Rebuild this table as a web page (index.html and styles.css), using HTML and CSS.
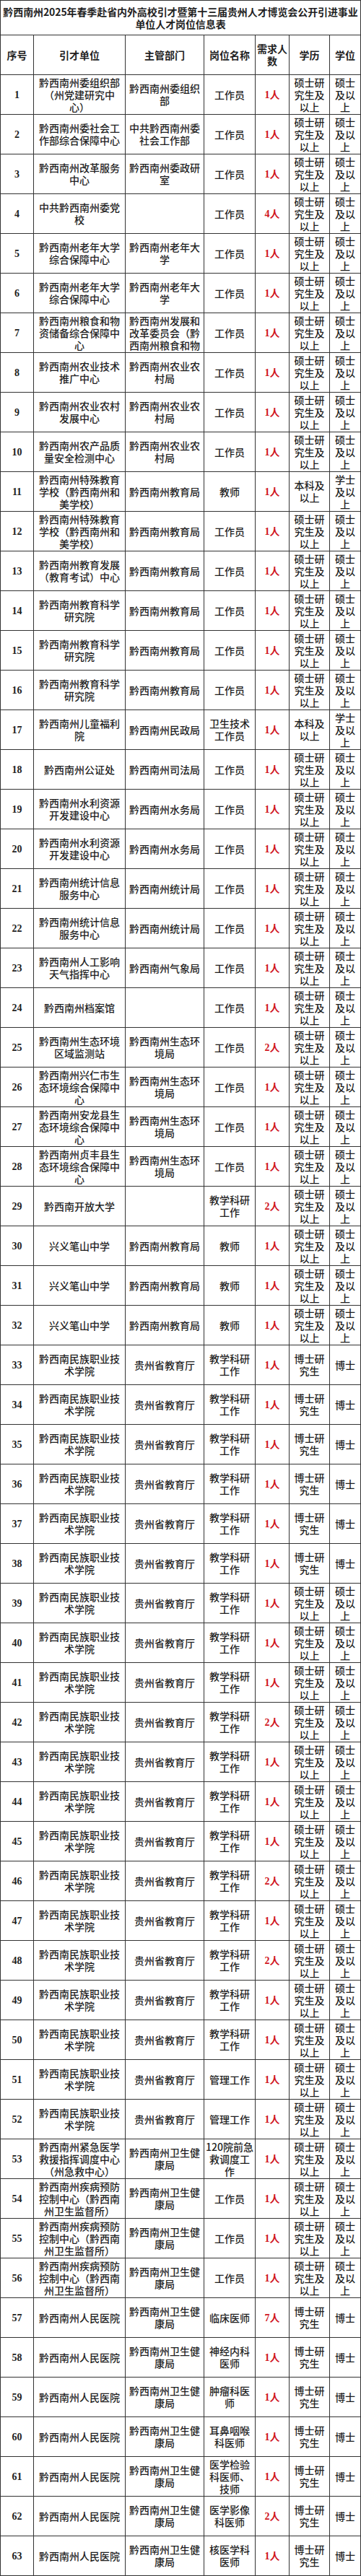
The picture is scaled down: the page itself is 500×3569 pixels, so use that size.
FILE: index.html
```html
<!DOCTYPE html>
<html lang="zh-CN">
<head>
<meta charset="utf-8">
<title>黔西南州2025年春季赴省内外高校引才暨第十三届贵州人才博览会公开引进事业单位人才岗位信息表</title>
<link rel="stylesheet" href="styles.css">
</head>
<body>
<div class="sheet">
  <div class="title">黔西南州2025年春季赴省内外高校引才暨第十三届贵州人才博览会公开引进事业<br>单位人才岗位信息表</div>

  <div class="row head">
    <div class="cell">序号</div><div class="cell">引才单位</div><div class="cell">主管部门</div><div class="cell">岗位名称</div><div class="cell">需求人数</div><div class="cell">学历</div><div class="cell">学位</div>
  </div>

  <div class="row"><div class="cell num">1</div><div class="cell">黔西南州委组织部（州党建研究中心）</div><div class="cell">黔西南州委组织部</div><div class="cell">工作员</div><div class="cell red">1人</div><div class="cell">硕士研究生及以上</div><div class="cell">硕士及以上</div></div>
  <div class="row"><div class="cell num">2</div><div class="cell">黔西南州委社会工作部综合保障中心</div><div class="cell">中共黔西南州委社会工作部</div><div class="cell">工作员</div><div class="cell red">1人</div><div class="cell">硕士研究生及以上</div><div class="cell">硕士及以上</div></div>
  <div class="row"><div class="cell num">3</div><div class="cell">黔西南州改革服务中心</div><div class="cell">黔西南州委政研室</div><div class="cell">工作员</div><div class="cell red">1人</div><div class="cell">硕士研究生及以上</div><div class="cell">硕士及以上</div></div>
  <div class="row"><div class="cell num">4</div><div class="cell">中共黔西南州委党校</div><div class="cell"></div><div class="cell">工作员</div><div class="cell red">4人</div><div class="cell">硕士研究生及以上</div><div class="cell">硕士及以上</div></div>
  <div class="row"><div class="cell num">5</div><div class="cell">黔西南州老年大学综合保障中心</div><div class="cell">黔西南州老年大学</div><div class="cell">工作员</div><div class="cell red">1人</div><div class="cell">硕士研究生及以上</div><div class="cell">硕士及以上</div></div>
  <div class="row"><div class="cell num">6</div><div class="cell">黔西南州老年大学综合保障中心</div><div class="cell">黔西南州老年大学</div><div class="cell">工作员</div><div class="cell red">1人</div><div class="cell">硕士研究生及以上</div><div class="cell">硕士及以上</div></div>
  <div class="row"><div class="cell num">7</div><div class="cell">黔西南州粮食和物资储备综合保障中心</div><div class="cell">黔西南州发展和改革委员会（黔西南州粮食和物</div><div class="cell">工作员</div><div class="cell red">1人</div><div class="cell">硕士研究生及以上</div><div class="cell">硕士及以上</div></div>
  <div class="row"><div class="cell num">8</div><div class="cell">黔西南州农业技术推广中心</div><div class="cell">黔西南州农业农村局</div><div class="cell">工作员</div><div class="cell red">1人</div><div class="cell">硕士研究生及以上</div><div class="cell">硕士及以上</div></div>
  <div class="row"><div class="cell num">9</div><div class="cell">黔西南州农业农村发展中心</div><div class="cell">黔西南州农业农村局</div><div class="cell">工作员</div><div class="cell red">1人</div><div class="cell">硕士研究生及以上</div><div class="cell">硕士及以上</div></div>
  <div class="row"><div class="cell num">10</div><div class="cell">黔西南州农产品质量安全检测中心</div><div class="cell">黔西南州农业农村局</div><div class="cell">工作员</div><div class="cell red">1人</div><div class="cell">硕士研究生及以上</div><div class="cell">硕士及以上</div></div>
  <div class="row"><div class="cell num">11</div><div class="cell">黔西南州特殊教育学校（黔西南州和美学校）</div><div class="cell">黔西南州教育局</div><div class="cell">教师</div><div class="cell red">1人</div><div class="cell">本科及以上</div><div class="cell">学士及以上</div></div>
  <div class="row"><div class="cell num">12</div><div class="cell">黔西南州特殊教育学校（黔西南州和美学校）</div><div class="cell">黔西南州教育局</div><div class="cell">工作员</div><div class="cell red">1人</div><div class="cell">硕士研究生及以上</div><div class="cell">硕士及以上</div></div>
  <div class="row"><div class="cell num">13</div><div class="cell">黔西南州教育发展（教育考试）中心</div><div class="cell">黔西南州教育局</div><div class="cell">工作员</div><div class="cell red">1人</div><div class="cell">硕士研究生及以上</div><div class="cell">硕士及以上</div></div>
  <div class="row"><div class="cell num">14</div><div class="cell">黔西南州教育科学研究院</div><div class="cell">黔西南州教育局</div><div class="cell">工作员</div><div class="cell red">1人</div><div class="cell">硕士研究生及以上</div><div class="cell">硕士及以上</div></div>
  <div class="row"><div class="cell num">15</div><div class="cell">黔西南州教育科学研究院</div><div class="cell">黔西南州教育局</div><div class="cell">工作员</div><div class="cell red">1人</div><div class="cell">硕士研究生及以上</div><div class="cell">硕士及以上</div></div>
  <div class="row"><div class="cell num">16</div><div class="cell">黔西南州教育科学研究院</div><div class="cell">黔西南州教育局</div><div class="cell">工作员</div><div class="cell red">1人</div><div class="cell">硕士研究生及以上</div><div class="cell">硕士及以上</div></div>
  <div class="row"><div class="cell num">17</div><div class="cell">黔西南州儿童福利院</div><div class="cell">黔西南州民政局</div><div class="cell">卫生技术工作员</div><div class="cell red">1人</div><div class="cell">本科及以上</div><div class="cell">学士及以上</div></div>
  <div class="row"><div class="cell num">18</div><div class="cell">黔西南州公证处</div><div class="cell">黔西南州司法局</div><div class="cell">工作员</div><div class="cell red">1人</div><div class="cell">硕士研究生及以上</div><div class="cell">硕士及以上</div></div>
  <div class="row"><div class="cell num">19</div><div class="cell">黔西南州水利资源开发建设中心</div><div class="cell">黔西南州水务局</div><div class="cell">工作员</div><div class="cell red">1人</div><div class="cell">硕士研究生及以上</div><div class="cell">硕士及以上</div></div>
  <div class="row"><div class="cell num">20</div><div class="cell">黔西南州水利资源开发建设中心</div><div class="cell">黔西南州水务局</div><div class="cell">工作员</div><div class="cell red">1人</div><div class="cell">硕士研究生及以上</div><div class="cell">硕士及以上</div></div>
  <div class="row"><div class="cell num">21</div><div class="cell">黔西南州统计信息服务中心</div><div class="cell">黔西南州统计局</div><div class="cell">工作员</div><div class="cell red">1人</div><div class="cell">硕士研究生及以上</div><div class="cell">硕士及以上</div></div>
  <div class="row"><div class="cell num">22</div><div class="cell">黔西南州统计信息服务中心</div><div class="cell">黔西南州统计局</div><div class="cell">工作员</div><div class="cell red">1人</div><div class="cell">硕士研究生及以上</div><div class="cell">硕士及以上</div></div>
  <div class="row"><div class="cell num">23</div><div class="cell">黔西南州人工影响天气指挥中心</div><div class="cell">黔西南州气象局</div><div class="cell">工作员</div><div class="cell red">1人</div><div class="cell">硕士研究生及以上</div><div class="cell">硕士及以上</div></div>
  <div class="row"><div class="cell num">24</div><div class="cell">黔西南州档案馆</div><div class="cell"></div><div class="cell">工作员</div><div class="cell red">1人</div><div class="cell">硕士研究生及以上</div><div class="cell">硕士及以上</div></div>
  <div class="row"><div class="cell num">25</div><div class="cell">黔西南州生态环境区域监测站</div><div class="cell">黔西南州生态环境局</div><div class="cell">工作员</div><div class="cell red">2人</div><div class="cell">硕士研究生及以上</div><div class="cell">硕士及以上</div></div>
  <div class="row"><div class="cell num">26</div><div class="cell">黔西南州兴仁市生态环境综合保障中心</div><div class="cell">黔西南州生态环境局</div><div class="cell">工作员</div><div class="cell red">1人</div><div class="cell">硕士研究生及以上</div><div class="cell">硕士及以上</div></div>
  <div class="row"><div class="cell num">27</div><div class="cell">黔西南州安龙县生态环境综合保障中心</div><div class="cell">黔西南州生态环境局</div><div class="cell">工作员</div><div class="cell red">1人</div><div class="cell">硕士研究生及以上</div><div class="cell">硕士及以上</div></div>
  <div class="row"><div class="cell num">28</div><div class="cell">黔西南州贞丰县生态环境综合保障中心</div><div class="cell">黔西南州生态环境局</div><div class="cell">工作员</div><div class="cell red">1人</div><div class="cell">硕士研究生及以上</div><div class="cell">硕士及以上</div></div>
  <div class="row"><div class="cell num">29</div><div class="cell">黔西南开放大学</div><div class="cell"></div><div class="cell">教学科研工作</div><div class="cell red">2人</div><div class="cell">硕士研究生及以上</div><div class="cell">硕士及以上</div></div>
  <div class="row"><div class="cell num">30</div><div class="cell">兴义笔山中学</div><div class="cell">黔西南州教育局</div><div class="cell">教师</div><div class="cell red">1人</div><div class="cell">硕士研究生及以上</div><div class="cell">硕士及以上</div></div>
  <div class="row"><div class="cell num">31</div><div class="cell">兴义笔山中学</div><div class="cell">黔西南州教育局</div><div class="cell">教师</div><div class="cell red">1人</div><div class="cell">硕士研究生及以上</div><div class="cell">硕士及以上</div></div>
  <div class="row"><div class="cell num">32</div><div class="cell">兴义笔山中学</div><div class="cell">黔西南州教育局</div><div class="cell">教师</div><div class="cell red">1人</div><div class="cell">硕士研究生及以上</div><div class="cell">硕士及以上</div></div>
  <div class="row"><div class="cell num">33</div><div class="cell">黔西南民族职业技术学院</div><div class="cell">贵州省教育厅</div><div class="cell">教学科研工作</div><div class="cell red">1人</div><div class="cell">博士研究生</div><div class="cell">博士</div></div>
  <div class="row"><div class="cell num">34</div><div class="cell">黔西南民族职业技术学院</div><div class="cell">贵州省教育厅</div><div class="cell">教学科研工作</div><div class="cell red">1人</div><div class="cell">博士研究生</div><div class="cell">博士</div></div>
  <div class="row"><div class="cell num">35</div><div class="cell">黔西南民族职业技术学院</div><div class="cell">贵州省教育厅</div><div class="cell">教学科研工作</div><div class="cell red">1人</div><div class="cell">博士研究生</div><div class="cell">博士</div></div>
  <div class="row"><div class="cell num">36</div><div class="cell">黔西南民族职业技术学院</div><div class="cell">贵州省教育厅</div><div class="cell">教学科研工作</div><div class="cell red">1人</div><div class="cell">博士研究生</div><div class="cell">博士</div></div>
  <div class="row"><div class="cell num">37</div><div class="cell">黔西南民族职业技术学院</div><div class="cell">贵州省教育厅</div><div class="cell">教学科研工作</div><div class="cell red">1人</div><div class="cell">博士研究生</div><div class="cell">博士</div></div>
  <div class="row"><div class="cell num">38</div><div class="cell">黔西南民族职业技术学院</div><div class="cell">贵州省教育厅</div><div class="cell">教学科研工作</div><div class="cell red">1人</div><div class="cell">博士研究生</div><div class="cell">博士</div></div>
  <div class="row"><div class="cell num">39</div><div class="cell">黔西南民族职业技术学院</div><div class="cell">贵州省教育厅</div><div class="cell">教学科研工作</div><div class="cell red">1人</div><div class="cell">硕士研究生及以上</div><div class="cell">硕士及以上</div></div>
  <div class="row"><div class="cell num">40</div><div class="cell">黔西南民族职业技术学院</div><div class="cell">贵州省教育厅</div><div class="cell">教学科研工作</div><div class="cell red">1人</div><div class="cell">硕士研究生及以上</div><div class="cell">硕士及以上</div></div>
  <div class="row"><div class="cell num">41</div><div class="cell">黔西南民族职业技术学院</div><div class="cell">贵州省教育厅</div><div class="cell">教学科研工作</div><div class="cell red">1人</div><div class="cell">硕士研究生及以上</div><div class="cell">硕士及以上</div></div>
  <div class="row"><div class="cell num">42</div><div class="cell">黔西南民族职业技术学院</div><div class="cell">贵州省教育厅</div><div class="cell">教学科研工作</div><div class="cell red">2人</div><div class="cell">硕士研究生及以上</div><div class="cell">硕士及以上</div></div>
  <div class="row"><div class="cell num">43</div><div class="cell">黔西南民族职业技术学院</div><div class="cell">贵州省教育厅</div><div class="cell">教学科研工作</div><div class="cell red">1人</div><div class="cell">硕士研究生及以上</div><div class="cell">硕士及以上</div></div>
  <div class="row"><div class="cell num">44</div><div class="cell">黔西南民族职业技术学院</div><div class="cell">贵州省教育厅</div><div class="cell">教学科研工作</div><div class="cell red">1人</div><div class="cell">硕士研究生及以上</div><div class="cell">硕士及以上</div></div>
  <div class="row"><div class="cell num">45</div><div class="cell">黔西南民族职业技术学院</div><div class="cell">贵州省教育厅</div><div class="cell">教学科研工作</div><div class="cell red">1人</div><div class="cell">硕士研究生及以上</div><div class="cell">硕士及以上</div></div>
  <div class="row"><div class="cell num">46</div><div class="cell">黔西南民族职业技术学院</div><div class="cell">贵州省教育厅</div><div class="cell">教学科研工作</div><div class="cell red">2人</div><div class="cell">硕士研究生及以上</div><div class="cell">硕士及以上</div></div>
  <div class="row"><div class="cell num">47</div><div class="cell">黔西南民族职业技术学院</div><div class="cell">贵州省教育厅</div><div class="cell">教学科研工作</div><div class="cell red">1人</div><div class="cell">硕士研究生及以上</div><div class="cell">硕士及以上</div></div>
  <div class="row"><div class="cell num">48</div><div class="cell">黔西南民族职业技术学院</div><div class="cell">贵州省教育厅</div><div class="cell">教学科研工作</div><div class="cell red">2人</div><div class="cell">硕士研究生及以上</div><div class="cell">硕士及以上</div></div>
  <div class="row"><div class="cell num">49</div><div class="cell">黔西南民族职业技术学院</div><div class="cell">贵州省教育厅</div><div class="cell">教学科研工作</div><div class="cell red">1人</div><div class="cell">硕士研究生及以上</div><div class="cell">硕士及以上</div></div>
  <div class="row"><div class="cell num">50</div><div class="cell">黔西南民族职业技术学院</div><div class="cell">贵州省教育厅</div><div class="cell">教学科研工作</div><div class="cell red">1人</div><div class="cell">硕士研究生及以上</div><div class="cell">硕士及以上</div></div>
  <div class="row"><div class="cell num">51</div><div class="cell">黔西南民族职业技术学院</div><div class="cell">贵州省教育厅</div><div class="cell">管理工作</div><div class="cell red">1人</div><div class="cell">硕士研究生及以上</div><div class="cell">硕士及以上</div></div>
  <div class="row"><div class="cell num">52</div><div class="cell">黔西南民族职业技术学院</div><div class="cell">贵州省教育厅</div><div class="cell">管理工作</div><div class="cell red">1人</div><div class="cell">硕士研究生及以上</div><div class="cell">硕士及以上</div></div>
  <div class="row"><div class="cell num">53</div><div class="cell">黔西南州紧急医学救援指挥调度中心（州急救中心）</div><div class="cell">黔西南州卫生健康局</div><div class="cell">120院前急救调度工作</div><div class="cell red">1人</div><div class="cell">硕士研究生及以上</div><div class="cell">硕士及以上</div></div>
  <div class="row"><div class="cell num">54</div><div class="cell">黔西南州疾病预防控制中心（黔西南州卫生监督所）</div><div class="cell">黔西南州卫生健康局</div><div class="cell">工作员</div><div class="cell red">1人</div><div class="cell">硕士研究生及以上</div><div class="cell">硕士及以上</div></div>
  <div class="row"><div class="cell num">55</div><div class="cell">黔西南州疾病预防控制中心（黔西南州卫生监督所）</div><div class="cell">黔西南州卫生健康局</div><div class="cell">工作员</div><div class="cell red">1人</div><div class="cell">硕士研究生及以上</div><div class="cell">硕士及以上</div></div>
  <div class="row"><div class="cell num">56</div><div class="cell">黔西南州疾病预防控制中心（黔西南州卫生监督所）</div><div class="cell">黔西南州卫生健康局</div><div class="cell">工作员</div><div class="cell red">1人</div><div class="cell">硕士研究生及以上</div><div class="cell">硕士及以上</div></div>
  <div class="row"><div class="cell num">57</div><div class="cell">黔西南州人民医院</div><div class="cell">黔西南州卫生健康局</div><div class="cell">临床医师</div><div class="cell red">7人</div><div class="cell">博士研究生</div><div class="cell">博士</div></div>
  <div class="row"><div class="cell num">58</div><div class="cell">黔西南州人民医院</div><div class="cell">黔西南州卫生健康局</div><div class="cell">神经内科医师</div><div class="cell red">1人</div><div class="cell">博士研究生</div><div class="cell">博士</div></div>
  <div class="row"><div class="cell num">59</div><div class="cell">黔西南州人民医院</div><div class="cell">黔西南州卫生健康局</div><div class="cell">肿瘤科医师</div><div class="cell red">1人</div><div class="cell">博士研究生</div><div class="cell">博士</div></div>
  <div class="row"><div class="cell num">60</div><div class="cell">黔西南州人民医院</div><div class="cell">黔西南州卫生健康局</div><div class="cell">耳鼻咽喉科医师</div><div class="cell red">1人</div><div class="cell">博士研究生</div><div class="cell">博士</div></div>
  <div class="row"><div class="cell num">61</div><div class="cell">黔西南州人民医院</div><div class="cell">黔西南州卫生健康局</div><div class="cell">医学检验科医师、技师</div><div class="cell red">1人</div><div class="cell">博士研究生</div><div class="cell">博士</div></div>
  <div class="row"><div class="cell num">62</div><div class="cell">黔西南州人民医院</div><div class="cell">黔西南州卫生健康局</div><div class="cell">医学影像科医师</div><div class="cell red">2人</div><div class="cell">博士研究生</div><div class="cell">博士</div></div>
  <div class="row"><div class="cell num">63</div><div class="cell">黔西南州人民医院</div><div class="cell">黔西南州卫生健康局</div><div class="cell">核医学科医师</div><div class="cell red">1人</div><div class="cell">博士研究生</div><div class="cell">博士</div></div>
</div>
</body>
</html>
```

FILE: styles.css
```css
html, body {
  margin: 0;
  padding: 0;
  background: #ffffff;
}

body {
  font-family: "Noto Sans CJK SC", "Noto Sans", sans-serif;
  color: #1f1f1f;
  font-size: 14px;
  line-height: 17px;
  text-spacing-trim: space-all;
}

.sheet {
  width: 500px;
  box-sizing: border-box;
  border-top: 1px solid #333333;
  border-left: 1px solid #333333;
}

.title {
  height: 48px;
  box-sizing: border-box;
  border-right: 1px solid #333333;
  border-bottom: 1px solid #333333;
  display: flex;
  align-items: center;
  justify-content: center;
  text-align: center;
  font-weight: 700;
  font-size: 14px;
  line-height: 17px;
  white-space: nowrap;
  letter-spacing: -0.1px;
}

.row {
  display: grid;
  grid-template-columns: 46px 127px 109px 71px 47px 56px 43px;
  height: 55px;
}

.cell {
  box-sizing: border-box;
  border-right: 1px solid #333333;
  border-bottom: 1px solid #333333;
  padding: 0 1px;
  display: flex;
  align-items: safe center;
  justify-content: center;
  text-align: center;
  overflow: hidden;
  font-weight: 500;
}

.head .cell {
  font-weight: 700;
}

.num {
  font-family: "Liberation Serif", "Noto Sans CJK SC", serif;
  font-weight: 700;
}

.red {
  color: #d0151e;
  font-family: "Liberation Serif", "Noto Sans CJK SC", serif;
  font-weight: 700;
}
```
